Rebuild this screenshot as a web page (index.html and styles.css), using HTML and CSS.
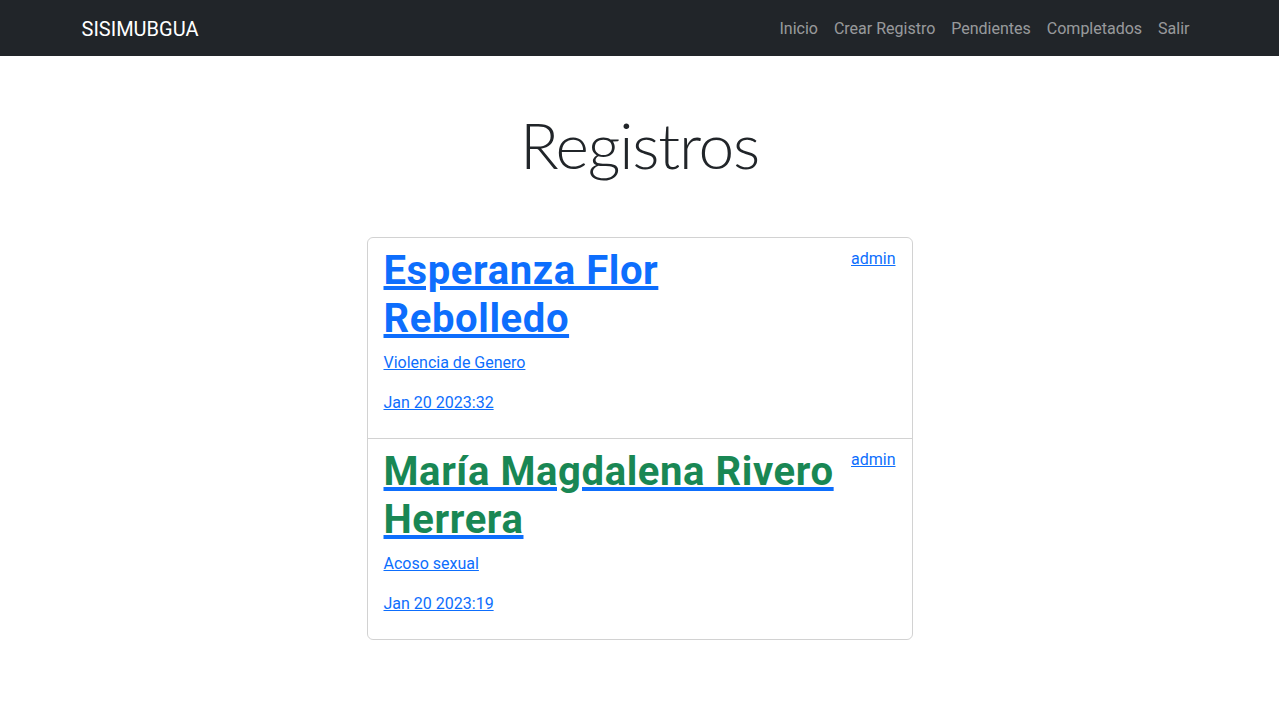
FILE: index.html
```html
<!DOCTYPE html>
<html lang="es">
<head>
<meta charset="utf-8">
<title>SISIMUBGUA</title>
<link rel="stylesheet" href="styles.css">
</head>
<body>
<nav class="navbar">
  <div class="container nav-inner">
    <a class="brand" href="#">SISIMUBGUA</a>
    <ul class="nav-links">
      <li><a href="#">Inicio</a></li>
      <li><a href="#">Crear Registro</a></li>
      <li><a href="#">Pendientes</a></li>
      <li><a href="#">Completados</a></li>
      <li><a href="#">Salir</a></li>
    </ul>
  </div>
</nav>
<main class="container">
  <h1 class="page-title">Registros</h1>
  <div class="list">
    <div class="item">
      <div class="item-head">
        <a class="name-link" href="#"><h1 class="name">Esperanza Flor Rebolledo</h1></a>
        <a class="user" href="#">admin</a>
      </div>
      <p class="meta"><a href="#">Violencia de Genero</a></p>
      <p class="meta"><a href="#">Jan 20 2023:32</a></p>
    </div>
    <div class="item">
      <div class="item-head">
        <a class="name-link" href="#"><h1 class="name name-done">María Magdalena Rivero Herrera</h1></a>
        <a class="user" href="#">admin</a>
      </div>
      <p class="meta"><a href="#">Acoso sexual</a></p>
      <p class="meta"><a href="#">Jan 20 2023:19</a></p>
    </div>
  </div>
</main>
</body>
</html>
```
FILE: styles.css
```css
* { box-sizing: border-box; }
body {
  margin: 0;
  font-family: Roboto, "Liberation Sans", sans-serif;
  font-size: 16px;
  line-height: 1.5;
  color: #212529;
  background: #fff;
}
a { color: #0d6efd; }
.container {
  max-width: 1140px;
  margin: 0 auto;
  padding: 0 12px;
}
.navbar {
  background: #212529;
  padding: 9px 0 7px;
}
.nav-inner {
  display: flex;
  align-items: center;
  justify-content: space-between;
}
.brand {
  color: #fff;
  font-size: 20px;
  line-height: 30px;
  padding: 5px 0;
  text-decoration: none;
}
.nav-links {
  display: flex;
  list-style: none;
  margin: 0;
  padding: 0;
}
.nav-links a {
  display: block;
  padding: 8px;
  color: rgba(255,255,255,.55);
  text-decoration: none;
}
.page-title {
  font-family: Lato, Roboto, sans-serif;
  font-size: 64px;
  font-weight: 300;
  letter-spacing: -1.2px;
  line-height: 1.2;
  text-align: center;
  margin: 51px 0 53px;
}
.list {
  width: 546px;
  margin: 0 auto;
  border: 1px solid rgba(0,0,0,.175);
  border-radius: 6px;
}
.item {
  padding: 9px 16px 7px;
}
.item + .item {
  border-top: 1px solid rgba(0,0,0,.175);
}
.item-head {
  display: flex;
  justify-content: space-between;
}
.name {
  font-size: 40px;
  font-weight: 700;
  letter-spacing: 0.6px;
  line-height: 1.2;
  margin: 0 0 8px;
  color: #0d6efd;
}
.name-done { color: #198754; }
.meta {
  margin: 0 0 16px;
}
```
